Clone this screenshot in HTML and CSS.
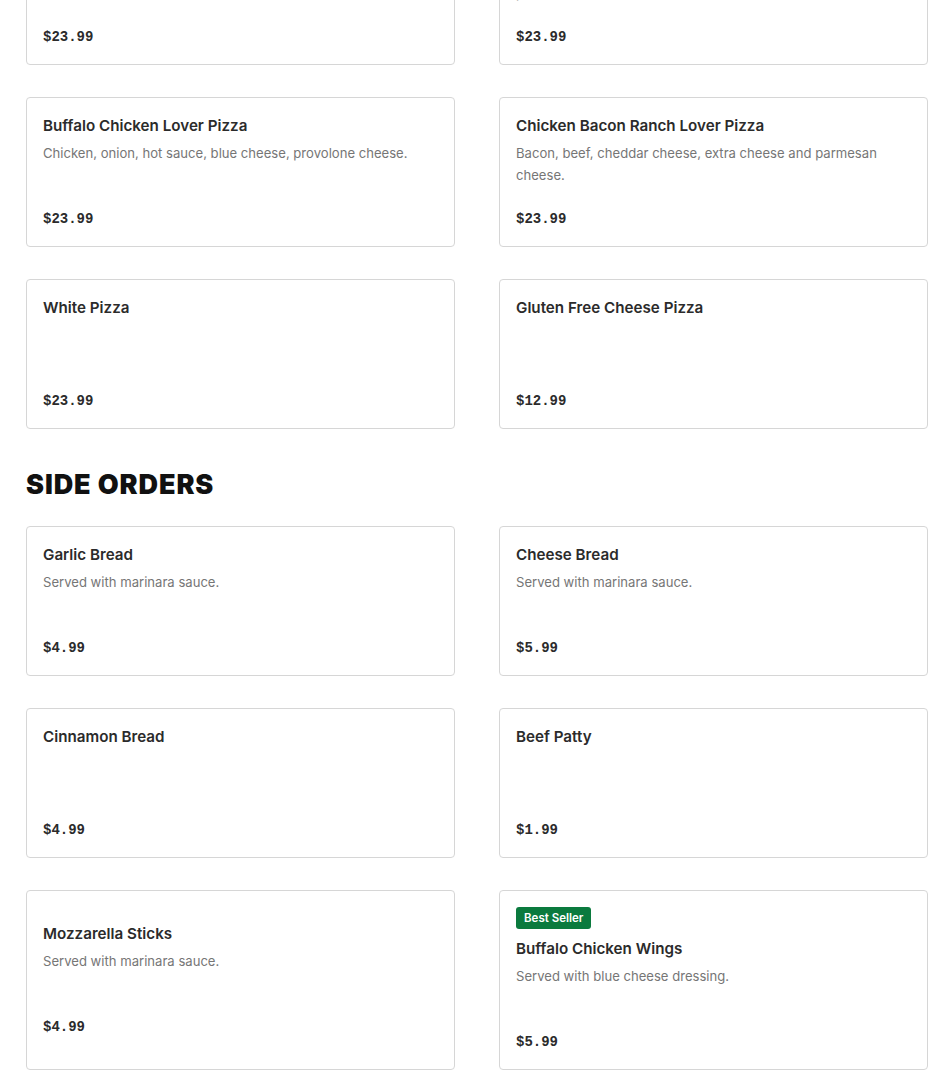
FILE: index.html
```html
<!DOCTYPE html>
<html>
<head>
<meta charset="utf-8">
<link rel="stylesheet" href="styles.css">
</head>
<body>
<main class="menu">
  <section class="section section-scrolled">
    <div class="grid">
      <div class="card">
        <div class="card-body">
          <h3 class="title">Veggie Lover Pizza</h3>
          <p class="desc"></p>
          <div class="price">$23.99</div>
        </div>
      </div>
      <div class="card">
        <div class="card-body">
          <h3 class="title">Meat Lover Pizza</h3>
          <p class="desc">Pepperoni, sausage, ham, bacon, beef, extra cheese and provolone cheese.</p>
          <div class="price">$23.99</div>
        </div>
      </div>
      <div class="card">
        <div class="card-body">
          <h3 class="title">Buffalo Chicken Lover Pizza</h3>
          <p class="desc">Chicken, onion, hot sauce, blue cheese, provolone cheese.</p>
          <div class="price">$23.99</div>
        </div>
      </div>
      <div class="card">
        <div class="card-body">
          <h3 class="title">Chicken Bacon Ranch Lover Pizza</h3>
          <p class="desc">Bacon, beef, cheddar cheese, extra cheese and parmesan cheese.</p>
          <div class="price">$23.99</div>
        </div>
      </div>
      <div class="card">
        <div class="card-body">
          <h3 class="title">White Pizza</h3>
          <p class="desc"></p>
          <div class="price">$23.99</div>
        </div>
      </div>
      <div class="card">
        <div class="card-body">
          <h3 class="title">Gluten Free Cheese Pizza</h3>
          <p class="desc"></p>
          <div class="price">$12.99</div>
        </div>
      </div>
    </div>
  </section>

  <section class="section">
    <h2 class="section-title">SIDE ORDERS</h2>
    <div class="grid">
      <div class="card">
        <div class="card-body">
          <h3 class="title">Garlic Bread</h3>
          <p class="desc">Served with marinara sauce.</p>
          <div class="price">$4.99</div>
        </div>
      </div>
      <div class="card">
        <div class="card-body">
          <h3 class="title">Cheese Bread</h3>
          <p class="desc">Served with marinara sauce.</p>
          <div class="price">$5.99</div>
        </div>
      </div>
      <div class="card">
        <div class="card-body">
          <h3 class="title">Cinnamon Bread</h3>
          <p class="desc"></p>
          <div class="price">$4.99</div>
        </div>
      </div>
      <div class="card">
        <div class="card-body">
          <h3 class="title">Beef Patty</h3>
          <p class="desc"></p>
          <div class="price">$1.99</div>
        </div>
      </div>
      <div class="card">
        <div class="card-body">
          <h3 class="title">Mozzarella Sticks</h3>
          <p class="desc">Served with marinara sauce.</p>
          <div class="price">$4.99</div>
        </div>
      </div>
      <div class="card">
        <div class="card-body">
          <span class="badge">Best Seller</span>
          <h3 class="title">Buffalo Chicken Wings</h3>
          <p class="desc">Served with blue cheese dressing.</p>
          <div class="price">$5.99</div>
        </div>
      </div>
    </div>
  </section>
</main>
</body>
</html>
```

FILE: styles.css
```css
* {
  box-sizing: border-box;
}

html, body {
  margin: 0;
  padding: 0;
  background: #ffffff;
}

body {
  font-family: "Inter", "Liberation Sans", sans-serif;
  color: #2b2b2b;
  overflow: hidden;
}

.menu {
  padding: 0 22px 40px 26px;
  margin-top: -85px;
}

.section-title {
  margin: 46px 0 0 0;
  height: 51px;
  font-family: "Inter", "Liberation Sans", sans-serif;
  font-weight: 900;
  font-size: 27px;
  line-height: 19px;
  letter-spacing: 0.9px;
  color: #111111;
}

.grid {
  display: grid;
  grid-template-columns: 1fr 1fr;
  column-gap: 44px;
  row-gap: 32px;
}

.card {
  border: 1px solid #d6d6d6;
  border-radius: 4px;
  background: #ffffff;
  padding: 16px 16px 15px 16px;
  display: flex;
  flex-direction: column;
  justify-content: center;
}

.card-body {
  display: flex;
  flex-direction: column;
  align-items: flex-start;
  min-height: 117px;
}

.badge {
  display: inline-block;
  height: 22px;
  padding: 0 8px;
  margin-top: 0;
  margin-bottom: 8px;
  background: #0b7a3e;
  color: #ffffff;
  border-radius: 3px;
  font-size: 11.5px;
  font-weight: 600;
  line-height: 22px;
}

.title {
  margin: 0;
  font-size: 15.2px;
  font-weight: 600;
  line-height: 24px;
  color: #2b2b2b;
}

.desc {
  margin: 4px 0 0 0;
  min-height: 44px;
  font-size: 13.1px;
  line-height: 22px;
  color: #767676;
  padding-right: 30px;
}

.price {
  margin-top: auto;
  padding-top: 21px;
  font-family: "Liberation Mono", "DejaVu Sans Mono", monospace;
  font-size: 14px;
  font-weight: 700;
  line-height: 24px;
  color: #2b2b2b;
}
```
